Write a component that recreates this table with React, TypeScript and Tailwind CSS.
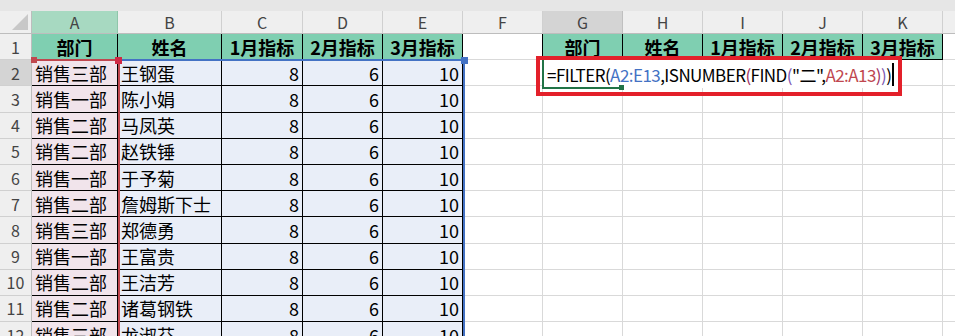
import React from 'react';

const cols = ['A', 'B', 'C', 'D', 'E', 'F', 'G', 'H', 'I', 'J', 'K', ''];
const heads = ['部门', '姓名', '1月指标', '2月指标', '3月指标'];
const people: [string, string][] = [
  ['销售三部', '王钢蛋'],
  ['销售一部', '陈小娟'],
  ['销售二部', '马凤英'],
  ['销售二部', '赵铁锤'],
  ['销售一部', '于予菊'],
  ['销售二部', '詹姆斯下士'],
  ['销售三部', '郑德勇'],
  ['销售一部', '王富贵'],
  ['销售二部', '王洁芳'],
  ['销售二部', '诸葛钢铁'],
  ['销售三部', '龙淑芬'],
];

const inTable = (r: number, c: number) =>
  (r >= 1 && r <= 13 && c >= 0 && c <= 4) || (r === 1 && c >= 6 && c <= 10);

function Cell({ r, c }: { r: number; c: number }) {
  const t = inTable(r, c);
  const right = t || inTable(r, c + 1) ? 'border-r-black' : 'border-r-[#d9d9d9]';
  const bottom = t || inTable(r + 1, c) ? 'border-b-black' : 'border-b-[#d9d9d9]';
  let bg = 'bg-white';
  if (t && r === 1) bg = 'bg-[#7fcfb1]';
  else if (t && c === 0) bg = 'bg-[#f1e4eb]';
  else if (t) bg = 'bg-[#e9eef8]';

  let content: React.ReactNode = null;
  let align = 'justify-start';
  if (r === 1 && t) {
    content = heads[c >= 6 ? c - 6 : c];
    align = 'justify-center font-bold';
  } else if (r >= 2 && c <= 4) {
    const p = people[r - 2];
    if (c === 0) content = p[0];
    else if (c === 1) content = p[1];
    else {
      content = c === 2 ? '8' : c === 3 ? '6' : '10';
      align = 'justify-end';
    }
  }

  return (
    <div
      className={`flex items-center border-r border-b ${right} ${bottom} ${bg} ${align} px-[3px] text-[18px] leading-none text-black whitespace-nowrap overflow-hidden`}
    >
      {content}
    </div>
  );
}

export default function App() {
  const rows = Array.from({ length: 12 }, (_, i) => i + 1);
  return (
    <div className="relative w-[955px] h-[336px] overflow-hidden bg-white font-['Noto_Sans_CJK_SC',sans-serif]">
      <div className="h-[11px] bg-[#e6e6e6]" />
      <div className="grid grid-cols-[32px_86px_104px_81px_80px_80px_80px_80px_80px_80px_80px_80px_80px] grid-rows-[23px_repeat(12,26.2px)]">
        {/* corner */}
        <div className="relative bg-[#efefef] border-r border-b border-[#bdbdbd]">
          <div className="absolute right-[3px] bottom-[3px] w-0 h-0 border-l-[16px] border-l-transparent border-b-[16px] border-b-[#c8c8c8]" />
        </div>
        {cols.map((l, i) => (
          <div
            key={i}
            className={`flex items-center justify-center border-r border-b text-[16px] text-[#444] ${
              i === 0
                ? 'bg-[#a7d9c1] border-r-[#8fc6aa] border-b-[#bdbdbd]'
                : i === 6
                ? 'bg-[#d4d4d4] border-r-[#c0c0c0] border-b-[#bdbdbd]'
                : 'bg-[#efefef] border-r-[#d0d0d0] border-b-[#bdbdbd]'
            }`}
          >
            {l}
          </div>
        ))}
        {rows.map((r) => (
          <React.Fragment key={r}>
            <div
              className={`flex items-center justify-center border-r border-b border-r-[#bdbdbd] border-b-[#d0d0d0] text-[16px] text-[#444] ${
                r === 2 ? 'bg-[#d4d4d4]' : 'bg-[#efefef]'
              }`}
            >
              {r}
            </div>
            {cols.map((_, c) => (
              <Cell key={c} r={r} c={c} />
            ))}
          </React.Fragment>
        ))}
      </div>

      {/* range highlight A2:E13 (blue) */}
      <div className="absolute left-[32px] top-[59px] w-[433px] h-[300px] border-t-2 border-r-2 border-[#4472c4] pointer-events-none" />
      {/* range highlight A2:A13 (red) */}
      <div className="absolute left-[32px] top-[59px] w-[88px] h-[300px] border-t-2 border-r-2 border-[#c0474f] pointer-events-none" />
      <div className="absolute left-[31px] top-[57px] w-[6px] h-[6px] bg-[#c0474f]" />
      <div className="absolute left-[115px] top-[57px] w-[7px] h-[7px] bg-[#d02a45]" />
      <div className="absolute left-[461px] top-[57px] w-[7px] h-[7px] bg-[#4472c4]" />

      {/* editing cell G2 */}
      <div className="absolute left-[543px] top-[60px] w-[355px] h-[28px] bg-white flex items-center pl-[4px] text-[17px] tracking-[-0.55px] leading-none whitespace-nowrap">
        <span className="text-black">=FILTER(</span>
        <span className="text-[#4472c4]">A2:E13</span>
        <span className="text-black">,ISNUMBER</span>
        <span className="text-[#a0305e]">(</span>
        <span className="text-black">FIND</span>
        <span className="text-[#7b55b0]">(</span>
        <span className="text-black">"二",</span>
        <span className="text-[#c0474f]">A2:A13</span>
        <span className="text-[#a0305e]">)</span>
        <span className="text-[#7b55b0]">)</span>
        <span className="text-black">)</span>
        <span className="ml-[1px] w-[1.5px] h-[23px] bg-black" />
      </div>
      <div className="absolute left-[542px] top-[60px] w-[2px] h-[29px] bg-[#217346]" />
      <div className="absolute left-[542px] top-[87px] w-[79px] h-[2px] bg-[#217346]" />
      <div className="absolute left-[619px] top-[85px] w-[5px] h-[5px] bg-[#217346]" />

      {/* red annotation box */}
      <div className="absolute left-[536px] top-[56px] w-[366px] h-[40px] border-4 border-[#e3202a]" />
    </div>
  );
}
